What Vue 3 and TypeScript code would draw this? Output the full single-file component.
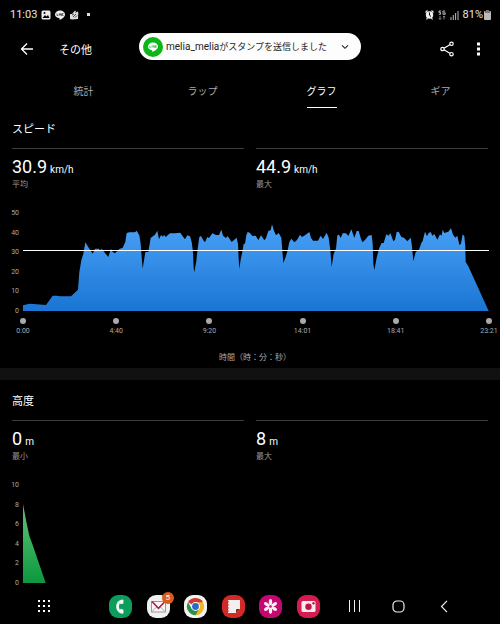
<script setup lang="ts">
type Point = [x: number, height: number]

interface Metric {
  value: string
  unit: string
  label: string
}

interface Tab {
  label: string
  active: boolean
}

const PLOT_WIDTH = 1398
const PLOT_HEIGHT = 294

const tabs: Tab[] = [
  { label: '統計', active: false },
  { label: 'ラップ', active: false },
  { label: 'グラフ', active: true },
  { label: 'ギア', active: false },
]

const speedMetrics: Metric[] = [
  { value: '30.9', unit: 'km/h', label: '平均' },
  { value: '44.9', unit: 'km/h', label: '最大' },
]

const altitudeMetrics: Metric[] = [
  { value: '0', unit: 'm', label: '最小' },
  { value: '8', unit: 'm', label: '最大' },
]

const speedTicks = [50, 40, 30, 20, 10, 0]
const altitudeTicks = [10, 8, 6, 4, 2, 0]
const timeTicks = ['0:00', '4:40', '9:20', '14:01', '18:41', '23:21']

const speedPoints: Point[] = [
  [0, 17], [20, 22], [41, 20], [69, 18], [89, 46], [101, 46], [111, 44], [144, 44], [165, 64],
  [169, 117], [175, 152], [181, 172], [187, 206], [197, 190], [209, 172], [216, 187], [228, 187],
  [231, 182], [236, 187], [246, 174], [256, 162], [264, 187], [269, 177], [276, 173], [289, 186],
  [299, 190], [307, 207], [311, 234], [319, 236], [336, 236], [341, 241], [349, 227], [353, 202],
  [356, 162], [359, 127], [363, 152], [367, 177], [376, 177], [383, 219], [396, 229], [403, 241],
  [408, 215], [414, 228], [420, 223], [423, 229], [428, 222], [441, 233], [456, 233], [472, 235],
  [479, 224], [486, 215], [493, 227], [501, 224], [506, 207], [510, 177], [512, 130], [514, 116],
  [520, 150], [524, 187], [529, 222], [534, 225], [541, 212], [546, 206], [553, 222], [558, 219],
  [568, 233], [579, 228], [588, 228], [595, 244], [600, 226], [609, 219], [614, 225], [626, 207],
  [641, 220], [645, 202], [647, 157], [649, 126], [653, 154], [658, 177], [662, 202], [666, 202],
  [670, 227], [674, 237], [680, 235], [688, 225], [698, 226], [706, 213], [714, 227], [724, 212],
  [729, 219], [736, 240], [743, 242], [747, 260], [753, 240], [759, 227], [767, 234], [775, 220],
  [778, 182], [781, 144], [788, 162], [794, 182], [799, 207], [805, 217], [814, 206], [822, 213],
  [831, 229], [837, 222], [846, 227], [859, 237], [864, 220], [870, 211], [885, 211], [893, 226],
  [900, 216], [911, 235], [917, 220], [922, 182], [926, 132], [932, 172], [939, 187], [943, 227],
  [948, 229], [953, 219], [959, 233], [969, 233], [976, 225], [985, 245], [994, 219], [1001, 240],
  [1007, 240], [1013, 219], [1018, 206], [1026, 213], [1036, 226], [1046, 228], [1049, 202],
  [1051, 142], [1054, 122], [1061, 160], [1069, 190], [1076, 204], [1082, 204], [1090, 230],
  [1097, 226], [1102, 234], [1111, 209], [1116, 214], [1121, 237], [1127, 238], [1135, 222],
  [1143, 220], [1153, 209], [1163, 220], [1166, 202], [1169, 172], [1171, 149], [1178, 177],
  [1188, 184], [1195, 204], [1199, 210], [1206, 238], [1212, 224], [1217, 234], [1223, 237],
  [1228, 226], [1234, 231], [1243, 214], [1251, 230], [1256, 226], [1259, 244], [1264, 234],
  [1276, 238], [1284, 248], [1290, 229], [1297, 220], [1303, 226], [1309, 198], [1314, 202],
  [1319, 230], [1324, 224], [1327, 192], [1328, 147], [1336, 134], [1397, 0],
]

const altitudePoints: Point[] = [[0, 237], [9, 189], [19, 141], [29, 114], [68, 0]]

function areaPath(points: Point[]): string {
  const top = points.map(([x, h]) => `L${x} ${PLOT_HEIGHT - h}`).join('')
  return `M0 ${PLOT_HEIGHT}${top}Z`
}

const speedArea = areaPath(speedPoints)
const altitudeArea = areaPath(altitudePoints)
const viewBox = `0 0 ${PLOT_WIDTH} ${PLOT_HEIGHT}`
const petals = [0, 60, 120, 180, 240, 300]
</script>

<template>
  <div class="screen">
    <header>
      <div class="status">
        <div class="status-left">
          <span class="clock">11:03</span>
          <svg width="10" height="10" viewBox="0 0 10 10" aria-hidden="true">
            <rect x="0.5" y="0.5" width="9" height="9" rx="1.5" fill="#eee" />
            <path d="M1.5 8 4 5l1.5 1.5L7 5l1.500 3z" fill="#000" />
            <circle cx="3.500" cy="3" r="1" fill="#000" />
          </svg>
          <svg width="10" height="10" viewBox="0 0 10 10" aria-hidden="true">
            <path d="M5 .5C2.200.5 0 2.200 0 4.500 0 6.500 2 8 4.500 8.300L4.700 10C7 8.800 10 7 10 4.500 10 2.200 7.800.5 5 .5z" fill="#eee" />
            <path d="M2 3.500v2h1.200M4.300 3.500v2M5.200 5.500v-2l1.200 2v-2M8.500 3.500H7.500v2h1" fill="none" stroke="#222" stroke-width=".7" />
          </svg>
          <svg width="10" height="10" viewBox="0 0 10 10" aria-hidden="true">
            <path d="M1 4h2l3-3.500 1 .8L6 3l2.500-1.500.8 1L9 9 3 9.500 1 9z" fill="#ddd" />
            <path d="M3 5l2-1M4 7l3-3M6 7.500l2-2" stroke="#222" stroke-width=".8" />
          </svg>
          <span class="more-dot"></span>
        </div>
        <div class="status-right">
          <svg width="9" height="10" viewBox="0 0 9 10" aria-hidden="true">
            <path d="M.5 2.500 2.500.5M8.500 2.500 6.500.5M1.500 9.500l1-1.500M7.500 9.500l-1-1.500" stroke="#eee" stroke-width="1.200" />
            <circle cx="4.500" cy="5" r="3.700" fill="#eee" />
            <path d="M4.500 2.500V5.200L6 6.500" fill="none" stroke="#000" />
          </svg>
          <svg width="8" height="10" viewBox="0 0 8 10" aria-hidden="true">
            <path d="M3.200 1H1v1.500h1.500v1.800H.8M7.200 1H5v3.300h2.200V2.800H6" fill="none" stroke="#ccc" stroke-width=".9" />
            <path d="M2 6v3.500M.8 8.200 2 9.500l1.200-1.300M6 9.500V6M4.800 7.300 6 6l1.200 1.300" fill="none" stroke="#999" stroke-width=".8" />
          </svg>
          <svg width="9" height="10" viewBox="0 0 9 10" aria-hidden="true">
            <path d="M1 7v3M3.300 5v5M5.600 3v7M8 1v9" stroke="#bbb" />
          </svg>
          <div class="battery">
            <span>81%</span>
            <svg width="7" height="10" viewBox="0 0 7 10" aria-hidden="true">
              <rect x="2" width="3" height="2" fill="#777" />
              <rect y="1" width="7" height="9" rx="1" fill="#bbb" />
              <rect x="1" y="1" width="5" height="2" fill="#777" />
            </svg>
          </div>
        </div>
      </div>

      <div class="appbar">
        <button class="icon-button" aria-label="戻る">
          <svg width="14" height="14" viewBox="0 0 14 14" aria-hidden="true">
            <path d="M13 7H2M7 1.500 1.500 7 7 12.500" fill="none" stroke="#fff" stroke-width="1.300" />
          </svg>
        </button>
        <h1>その他</h1>
        <button class="icon-button" aria-label="共有">
          <svg width="14" height="16" viewBox="0 0 14 16" aria-hidden="true">
            <path d="M11.500 2.800 2.700 8l8.800 5.200" fill="none" stroke="#fff" stroke-width="1.200" />
            <g fill="#000" stroke="#fff" stroke-width="1.200">
              <circle cx="11.500" cy="2.800" r="1.700" />
              <circle cx="2.500" cy="8" r="1.700" />
              <circle cx="11.500" cy="13.200" r="1.700" />
            </g>
          </svg>
        </button>
        <button class="icon-button menu" aria-label="メニュー">
          <svg width="3" height="14" viewBox="0 0 3 14" aria-hidden="true">
            <path d="M0 .5h3v3H0zM0 5.500h3v3H0zM0 10.500h3v3H0z" fill="#fff" />
          </svg>
        </button>
        <button class="toast">
          <svg width="20" height="20" viewBox="0 0 20 20" aria-hidden="true">
            <circle cx="10" cy="10" r="10" fill="#0bb619" />
            <path d="M10 5.500c-2.900 0-5 1.700-5 4 0 2 1.600 3.400 4.200 3.800L9.400 15c2.300-1.100 5.600-3 5.600-5.500 0-2.300-2.100-4-5-4z" fill="#fff" />
            <path d="M6.800 8.500v2h1.100M9 8.500v2M10.100 10.500v-2l1.300 2v-2M13.600 8.500h-1.200v2h1.200M12.400 9.500h1" fill="none" stroke="#0bb619" stroke-width=".6" />
          </svg>
          <span class="message"><span class="sender">melia_melia</span>がスタンプを送信しました</span>
          <svg width="8" height="6" viewBox="0 0 8 6" aria-hidden="true">
            <path d="M1 1.300 4 4.300 7 1.300" fill="none" stroke="#222" stroke-width="1.100" />
          </svg>
        </button>
      </div>

      <nav class="tabs">
        <button v-for="tab in tabs" :key="tab.label" :class="{ active: tab.active }">
          <span>{{ tab.label }}</span>
        </button>
      </nav>
    </header>

    <main>
      <section class="speed">
        <h2>スピード</h2>
        <div class="metrics">
          <div v-for="m in speedMetrics" :key="m.label" class="metric">
            <p class="value"><span>{{ m.value }}</span><small>{{ m.unit }}</small></p>
            <p class="label">{{ m.label }}</p>
          </div>
        </div>
        <div class="chart">
          <div class="y-axis">
            <span v-for="t in speedTicks" :key="t">{{ t }}</span>
          </div>
          <svg class="plot" :viewBox="viewBox" preserveAspectRatio="none" aria-hidden="true">
            <defs>
              <linearGradient id="speed-fill" gradientUnits="userSpaceOnUse" x1="0" y1="34" x2="0" y2="294">
                <stop offset="0" stop-color="#49a0f7" />
                <stop offset="1" stop-color="#1a75d3" />
              </linearGradient>
            </defs>
            <path :d="speedArea" fill="url(#speed-fill)" />
            <path class="average" :d="`M0 112.500H${PLOT_WIDTH}`" />
          </svg>
          <div class="x-axis">
            <span v-for="t in timeTicks" :key="t"><i></i>{{ t }}</span>
          </div>
        </div>
        <p class="axis-title">時間（時：分：秒）</p>
      </section>

      <section class="altitude">
        <h2>高度</h2>
        <div class="metrics">
          <div v-for="m in altitudeMetrics" :key="m.label" class="metric">
            <p class="value"><span>{{ m.value }}</span><small>{{ m.unit }}</small></p>
            <p class="label">{{ m.label }}</p>
          </div>
        </div>
        <div class="chart">
          <div class="y-axis">
            <span v-for="t in altitudeTicks" :key="t">{{ t }}</span>
          </div>
          <svg class="plot" :viewBox="viewBox" preserveAspectRatio="none" aria-hidden="true">
            <defs>
              <linearGradient id="altitude-fill" gradientUnits="userSpaceOnUse" x1="0" y1="57" x2="0" y2="294">
                <stop offset="0" stop-color="#62bd78" />
                <stop offset="0.400" stop-color="#3fb35f" />
                <stop offset="1" stop-color="#0c983f" />
              </linearGradient>
            </defs>
            <path :d="altitudeArea" fill="url(#altitude-fill)" />
          </svg>
        </div>
      </section>
    </main>

    <footer class="navbar">
      <div class="apps">
        <button aria-label="アプリ一覧">
          <svg width="12" height="12" viewBox="0 0 12 12" aria-hidden="true">
            <path d="M0 1h2M5 1h2M10 1h2M0 6h2M5 6h2M10 6h2M0 11h2M5 11h2M10 11h2" stroke="#fff" stroke-width="2" />
          </svg>
        </button>
      </div>
      <div class="dock">
        <button aria-label="電話">
          <svg width="23" height="23" viewBox="0 0 23 23" aria-hidden="true">
            <rect width="23" height="23" rx="9" fill="#0a9d5b" />
            <path d="M13.800 4.500c-4.300.6-6.600 3.200-6.600 7s2.300 6.600 6.600 7.300l.7-.8v-3.300l-2.700-.9-.8 1c-.7-.8-1-1.800-1-3.200s.3-2.500 1-3.300l.8 1 2.700-.9V5.200z" fill="#f3f3f3" />
          </svg>
        </button>
        <button class="mail" aria-label="メール">
          <svg width="23" height="23" viewBox="0 0 23 23" aria-hidden="true">
            <rect width="23" height="23" rx="9" fill="#f0f0f0" />
            <rect x="4.500" y="6.500" width="14" height="10.500" fill="#f7f7f7" stroke="#999" />
            <path d="M4.500 17l5-5M18.500 17l-5-5" stroke="#aaa" />
            <path d="M5 6.500 11.500 13.300 18 6.500" fill="none" stroke="#a81c3f" stroke-width="1.500" />
          </svg>
          <b class="badge">5</b>
        </button>
        <button aria-label="ブラウザ">
          <svg width="23" height="23" viewBox="0 0 23 23" aria-hidden="true">
            <rect width="23" height="23" rx="9" fill="#f3f3f3" />
            <path d="M11.500 11.500 4 7.200A8.700 8.700 0 0 1 19 7.200z" fill="#d23a2e" />
            <path d="M11.500 11.500V7.200H19A8.700 8.700 0 0 1 11.500 20.200z" fill="#efb824" />
            <path d="M11.500 20.200A8.700 8.700 0 0 1 4 7.200l3.800 6.500 6.500 1.500z" fill="#2c9148" />
            <circle cx="11.500" cy="11.500" r="4.400" fill="#fff" />
            <circle cx="11.500" cy="11.500" r="3.400" fill="#2b68cf" />
          </svg>
        </button>
        <button aria-label="ノート">
          <svg width="23" height="23" viewBox="0 0 23 23" aria-hidden="true">
            <rect width="23" height="23" rx="9" fill="#d32a27" />
            <path d="M6 5h12v9l-4 4H6z" fill="#f4eeee" />
            <path d="M18 14l-4 4v-3.200l.8-.8z" fill="#8e1a1a" />
            <path d="M5 7h2M5 10h2M5 13h2M5 16h2" stroke="#d32a27" />
          </svg>
        </button>
        <button aria-label="ギャラリー">
          <svg width="23" height="23" viewBox="0 0 23 23" aria-hidden="true">
            <rect width="23" height="23" rx="9" fill="#c3086f" />
            <ellipse
              v-for="a in petals"
              :key="a"
              cx="11.500"
              cy="7"
              rx="1.700"
              ry="2.900"
              fill="#fceef5"
              :transform="`rotate(${a} 11.500 11.500)`"
            />
            <circle cx="11.500" cy="11.500" r="2.600" fill="#fceef5" />
            <circle cx="11.500" cy="11.500" r="1.300" fill="#c3086f" />
          </svg>
        </button>
        <button aria-label="カメラ">
          <svg width="23" height="23" viewBox="0 0 23 23" aria-hidden="true">
            <rect width="23" height="23" rx="9" fill="#d41c50" />
            <rect x="4.500" y="6" width="14" height="11" rx="1.500" fill="#fbe9ee" />
            <circle cx="11.500" cy="11.800" r="3.200" fill="#b81846" />
            <circle cx="16.500" cy="8.300" r="1.200" fill="#b81846" />
          </svg>
        </button>
      </div>
      <div class="system">
        <button aria-label="履歴">
          <svg width="12" height="12" viewBox="0 0 12 12" aria-hidden="true">
            <path d="M1.500 0v12M6.500 0v12M11.500 0v12" stroke="#eee" />
          </svg>
        </button>
        <button aria-label="ホーム">
          <svg width="13" height="13" viewBox="0 0 13 13" aria-hidden="true">
            <rect x="1" y="1" width="11" height="11" rx="4" fill="none" stroke="#eee" stroke-width="1.200" />
          </svg>
        </button>
        <button aria-label="戻る">
          <svg width="8" height="13" viewBox="0 0 8 13" aria-hidden="true">
            <path d="M7 .8 1.500 6.500 7 12.200" fill="none" stroke="#eee" stroke-width="1.200" />
          </svg>
        </button>
      </div>
    </footer>
  </div>
</template>

<style>
body {
  margin: 0;
  background: #000;
}
</style>

<style scoped>
.screen {
  display: flex;
  flex-direction: column;
  min-height: 100vh;
  background: #000;
  color: #fff;
  font-family: Roboto, "Noto Sans CJK JP", sans-serif;
  overflow-x: hidden;
}

h1,
h2,
p {
  margin: 0;
  font-weight: 400;
}

svg {
  display: block;
  flex: none;
}

button {
  display: flex;
  align-items: center;
  justify-content: center;
  margin: 0;
  padding: 0;
  border: 0;
  background: none;
  color: inherit;
  font: inherit;
  cursor: pointer;
}

.status {
  display: flex;
  justify-content: space-between;
  align-items: center;
  height: 29px;
  padding: 0 9px 0 10px;
  color: #e6e6e6;
  font-size: 11px;
}

.status-left,
.status-right {
  display: flex;
  align-items: center;
  gap: 4px;
}

.battery {
  display: flex;
  align-items: center;
  gap: 1px;
}

.more-dot {
  width: 3px;
  height: 3px;
  margin-left: 4px;
  background: #ddd;
}

.appbar {
  position: relative;
  display: flex;
  align-items: center;
  height: 40px;
  padding: 0 12px;
}

.icon-button {
  width: 30px;
  height: 30px;
}

h1 {
  flex: 1;
  padding-left: 17px;
  font-size: 11px;
}

.menu {
  margin-right: -5px;
  margin-left: 1px;
}

.toast {
  position: absolute;
  top: 4px;
  left: 50%;
  width: 222px;
  height: 27px;
  padding: 0 12px 0 4px;
  border-radius: 14px;
  background: #fdfdfd;
  color: #222;
  font-size: 9px;
  transform: translateX(-50%);
}

.message {
  flex: 1;
  padding-left: 3px;
  text-align: left;
  white-space: nowrap;
}

.sender {
  font-size: 10px;
}

.tabs {
  display: grid;
  grid-template-columns: repeat(4, 1fr);
  height: 39px;
  padding-left: 24px;
  color: #aaa;
  font-size: 10px;
}

.tabs span {
  padding-top: 8px;
  border-bottom: 1px solid transparent;
  line-height: 30px;
}

.tabs .active {
  color: #fff;
}

.tabs .active span {
  border-color: #fff;
}

h2 {
  padding: 4px 12px 0;
  font-size: 11px;
  line-height: 36px;
}

.speed {
  padding-bottom: 2px;
  border-bottom: 12px solid #111;
}

.altitude {
  padding-bottom: 5px;
}

.metrics {
  display: grid;
  grid-template-columns: 1fr 1fr;
  gap: 12px;
  padding: 0 12px;
}

.metric {
  border-top: 1px solid #3c3c3c;
}

.value {
  display: flex;
  align-items: baseline;
  gap: 3px;
  padding-top: 4px;
  font-size: 18px;
  line-height: 28px;
}

.value small {
  font-size: 10px;
  line-height: 16px;
}

.label {
  color: #999;
  font-size: 8px;
  line-height: 8px;
}

.chart {
  display: grid;
  grid-template-columns: 7px 1fr;
  column-gap: 4px;
  margin-top: 24px;
  padding: 0 11px 0 12px;
  color: #aaa;
  font-size: 7px;
}

.y-axis {
  display: flex;
  flex-direction: column;
  justify-content: space-between;
  align-items: flex-end;
}

.y-axis span {
  height: 0;
  line-height: 0;
}

.plot {
  width: 100%;
  height: 98px;
}

.average {
  fill: none;
  stroke: #fff;
  stroke-width: 1px;
  vector-effect: non-scaling-stroke;
  shape-rendering: crispEdges;
}

.x-axis {
  grid-column: 2;
  display: flex;
  justify-content: space-between;
  padding-top: 7px;
}

.x-axis span {
  display: flex;
  flex-direction: column;
  align-items: center;
  width: 0;
  line-height: 14px;
}

.x-axis i {
  flex: none;
  width: 6px;
  height: 6px;
  border-radius: 50%;
  background: #aaa;
}

.axis-title {
  margin-top: 12px;
  padding-left: 10px;
  color: #aaa;
  font-size: 8px;
  line-height: 16px;
  text-align: center;
}

.navbar {
  display: grid;
  grid-template-columns: 88fr 239fr 139fr 34fr;
  align-items: center;
  height: 36px;
  margin-top: auto;
}

.apps,
.dock,
.system {
  display: grid;
  grid-auto-flow: column;
  grid-auto-columns: 1fr;
  align-items: center;
  justify-items: center;
}

.dock {
  padding-left: 14px;
}

.system {
  padding-left: 4px;
}

.mail {
  position: relative;
}

.badge {
  position: absolute;
  top: -3px;
  right: -4px;
  width: 12px;
  height: 12px;
  border-radius: 50%;
  background: #dd5a1f;
  color: #fff;
  font-size: 8px;
  font-weight: 400;
  line-height: 12px;
  text-align: center;
}
</style>
